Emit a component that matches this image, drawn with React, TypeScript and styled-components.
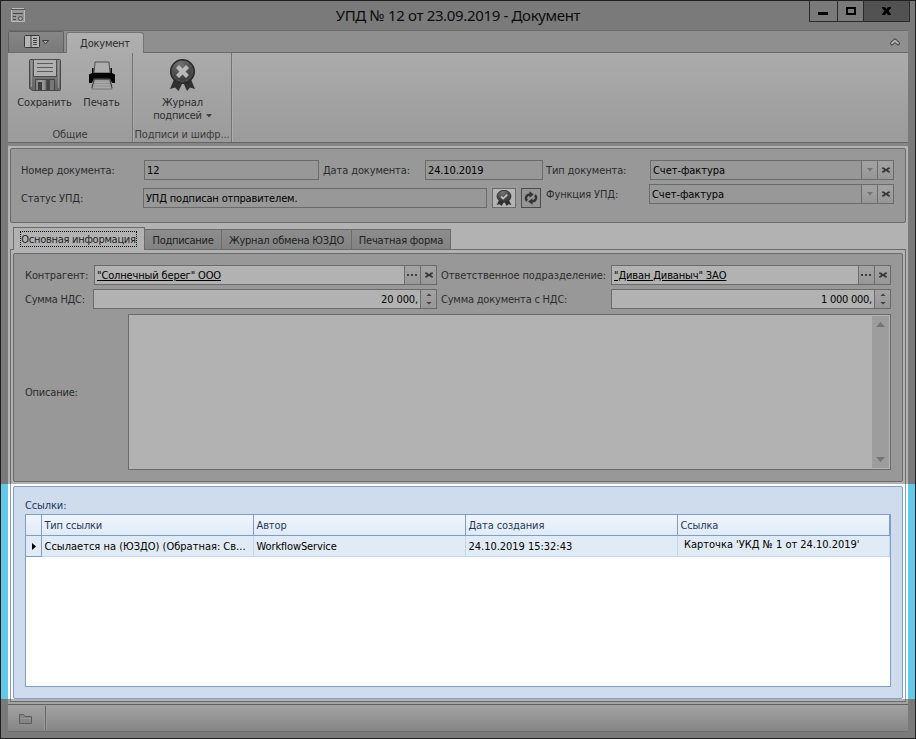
import React from 'react';
import styled, { createGlobalStyle, css } from 'styled-components';

const LINE = '#6b6b6b';
const PAGE = '#b2b2b2';
const PANEL = '#989898';
const FRAME = '#7a7a7a';
const BLUE = '#809dc4';

const GlobalStyle = createGlobalStyle`
  *, *::before, *::after { box-sizing: border-box; }
  html, body { margin: 0; padding: 0; }
  body {
    font-family: "DejaVu Sans Condensed", "DejaVu Sans", sans-serif;
    font-stretch: condensed;
    font-size: 11px;
    line-height: 14px;
    color: #2c2c2c;
    overflow: hidden;
  }
  svg { display: block; flex: none; }
`;

const Window = styled.div`
  width: 916px;
  height: 739px;
  border: 1px solid #202020;
  background: ${FRAME};
  display: flex;
  flex-direction: column;
`;

const Text = styled.span<{ $ls?: number }>`
  white-space: pre;
  letter-spacing: ${(p) => p.$ls ?? -0.12}px;
`;

/* Title bar */
const TitleBar = styled.header`
  height: 29px;
  flex: none;
  display: grid;
  grid-template-columns: 105px 1fr 105px;
`;
const TitleIcon = styled.div`
  padding: 6px 0 0 10px;
`;
const Title = styled.h1`
  margin: 0;
  padding-top: 3px;
  font: 400 15px/22px "Noto Sans", sans-serif;
  letter-spacing: -0.34px;
  text-align: center;
  color: #0c0c0c;
  white-space: pre;
`;
const WindowButtons = styled.div`
  width: 101px;
  height: 21px;
  margin-left: -1px;
  display: flex;
  border: 1px solid #2b2b2b;
  border-top: 0;
`;
const WindowButton = styled.button<{ $w: number; $close?: boolean }>`
  width: ${(p) => p.$w}px;
  padding: 0;
  border: 0;
  border-right: ${(p) => (p.$close ? 0 : 1)}px solid #2b2b2b;
  background: ${(p) => (p.$close ? '#525252' : 'transparent')};
`;

/* Ribbon */
const RibbonTabs = styled.div`
  height: 23px;
  flex: none;
  margin: 0 7px;
  padding-top: 1px;
  border-top: 1px solid #6c6c6c;
  border-bottom: 1px solid ${LINE};
  background: #8f8f8f;
  display: flex;
`;
const AppButton = styled.button`
  width: 56px;
  height: 21px;
  margin-top: -1px;
  padding: 3px 0 0 15px;
  border: 1px solid #616161;
  border-bottom: 0;
  border-radius: 2px 2px 0 0;
  background: linear-gradient(#868686, #7a7a7a);
  display: flex;
`;
const RibbonTab = styled.div`
  width: 78px;
  height: 22px;
  margin-left: 2px;
  padding-top: 4px;
  border: 1px solid #747474;
  border-bottom: 0;
  border-radius: 3px 3px 0 0;
  background: linear-gradient(#b0b0b0, #ababab);
  text-align: center;
`;
const Collapse = styled.div`
  margin: 6px 8px 0 auto;
`;
const Ribbon = styled.div`
  height: 90px;
  flex: none;
  margin: 0 7px;
  border-bottom: 1px solid #656565;
  background: linear-gradient(#ababab, #9b9b9b);
  display: flex;
`;
const Group = styled.section<{ $w: number }>`
  width: ${(p) => p.$w}px;
  border-right: 1px solid #737373;
  box-shadow: 1px 0 #adadad;
  display: flex;
  flex-direction: column;
`;
const GroupItems = styled.div`
  height: 75px;
  padding-left: 1px;
  display: flex;
  justify-content: center;
`;
const GroupCaption = styled.div`
  text-align: center;
  color: #3b3b3b;
  white-space: nowrap;
`;
const Tool = styled.div<{ $w: number }>`
  width: ${(p) => p.$w}px;
  display: flex;
  flex-direction: column;
  align-items: center;
`;
const ToolIcon = styled.div<{ $pad: number }>`
  height: 43px;
  padding-top: ${(p) => p.$pad}px;
`;
const ToolLabel = styled.div`
  height: 13px;
  display: flex;
  align-items: center;
  gap: 4px;
  line-height: 13px;
`;

/* Header form */
const FormArea = styled.div`
  height: 84px;
  flex: none;
  margin: 0 7px;
  padding: 5px 2px 0;
  border-top: 3px solid #858585;
  background: ${PAGE};
`;
const HeaderPanel = styled.section`
  height: 75px;
  margin-top: -3px;
  padding: 11px 0 0 10px;
  border: 1px solid ${LINE};
  border-radius: 2px;
  background: ${PANEL};
  display: grid;
  grid-template-columns: 525px 348px;
`;
const Col = styled.div<{ $gap: number }>`
  display: flex;
  flex-direction: column;
  gap: ${(p) => p.$gap}px;
`;
const Row = styled.div`
  height: 20px;
  display: flex;
  align-items: center;
`;
const Label = styled.label<{ $w: number; $ls?: number; $inset?: boolean }>`
  width: ${(p) => p.$w}px;
  flex: none;
  padding: 2px 0 0 ${(p) => (p.$inset ? 4 : 0)}px;
  letter-spacing: ${(p) => p.$ls ?? -0.12}px;
  white-space: pre;
`;
const Field = styled.div<{ $w: number; $light?: boolean; $right?: boolean }>`
  width: ${(p) => p.$w}px;
  height: 20px;
  flex: none;
  border: 1px solid ${LINE};
  background: ${(p) => (p.$light ? PAGE : PANEL)};
  color: #000;
  display: flex;
  align-items: stretch;
  > span {
    flex: 1;
    padding: 3px 2px 0 2px;
    text-align: ${(p) => (p.$right ? 'right' : 'left')};
  }
`;
const FieldLink = styled.span`
  text-decoration: underline;
  text-underline-offset: 1px;
  letter-spacing: -0.14px;
  white-space: pre;
`;
const FieldButton = styled.i`
  width: 16px;
  border-left: 1px solid ${LINE};
  background: linear-gradient(#a3a3a3, #979797);
  display: flex;
  align-items: center;
  justify-content: center;
`;
const IconButton = styled.button<{ $w: number; $light?: boolean }>`
  width: ${(p) => p.$w}px;
  height: 20px;
  margin-left: 5px;
  padding: 0;
  border: 1px solid ${(p) => (p.$light ? '#6b6b6b' : '#4c4c4c')};
  background: ${(p) => (p.$light ? '#b4b4b4' : '#959595')};
  display: flex;
  align-items: center;
  justify-content: center;
`;

/* Tabs */
const TabStrip = styled.nav`
  height: 22px;
  flex: none;
  margin: 0 7px;
  padding-left: 5px;
  background: ${PAGE};
  display: flex;
  align-items: flex-end;
`;
const Tab = styled.div<{ $w: number; $active?: boolean }>`
  width: ${(p) => p.$w}px;
  height: 20px;
  padding-top: 4px;
  border: 1px solid ${LINE};
  border-left: 0;
  border-bottom: 0;
  background: linear-gradient(#8d8d8d, #828282);
  color: #222;
  text-align: center;
  ${(p) =>
    p.$active &&
    css`
      position: relative;
      height: 23px;
      margin-bottom: -1px;
      padding: 3px 7px 0 6px;
      border-left: 1px solid ${LINE};
      background: ${PAGE};
    `}
`;
const Focus = styled.div`
  height: 16px;
  border: 1px dotted #000;
  display: flex;
  justify-content: center;
  line-height: 16px;
`;

const PageUpper = styled.div`
  height: 235px;
  flex: none;
  margin: 0 7px;
  padding: 0 2px;
  background: ${PAGE};
`;
const PageUpperInner = styled.div`
  height: 235px;
  padding: 3px 2px 2px;
  border: 1px solid ${LINE};
  border-bottom: 0;
`;
const DetailsPanel = styled.section`
  height: 229px;
  padding: 11px 0 0 11px;
  border: 1px solid ${LINE};
  border-radius: 2px;
  background: ${PANEL};
  display: flex;
  flex-direction: column;
`;
const DetailsRow = styled(Row)`
  margin-bottom: 4px;
`;
const DescriptionRow = styled.div`
  height: 156px;
  margin-top: 1px;
  display: flex;
  align-items: center;
`;
const Description = styled.div`
  width: 763px;
  height: 156px;
  padding: 1px;
  border: 1px solid ${LINE};
  background: ${PAGE};
  display: flex;
  justify-content: flex-end;
`;
const ScrollBar = styled.div`
  width: 17px;
  padding: 6px 0;
  background: #9d9d9d;
  display: flex;
  flex-direction: column;
  align-items: center;
  justify-content: space-between;
`;

/* Links */
const Highlight = styled.div`
  height: 215px;
  flex: none;
  padding: 0 7px;
  background: #63c9e8;
`;
const HighlightPage = styled.div`
  height: 215px;
  padding: 0 2px;
  background: #fff;
`;
const HighlightInner = styled.div`
  height: 215px;
  padding: 2px 2px 0;
  border: 1px solid ${BLUE};
  border-width: 0 1px;
`;
const LinksPanel = styled.section`
  height: 213px;
  padding: 11px 0 0 11px;
  border: 1px solid ${BLUE};
  border-radius: 2px;
  background: #cfdcee;
  color: #1e395b;
`;
const LinksCaption = styled.div`
  height: 16px;
  padding-top: 1px;
`;
const Table = styled.div`
  width: 866px;
  height: 173px;
  border: 1px solid ${BLUE};
  background: #fff;
`;
const TableRow = styled.div<{ $head?: boolean }>`
  width: 864px;
  height: 21px;
  display: grid;
  grid-template-columns: 16px 212px 212px 212px 212px;
  background: ${(p) => (p.$head ? 'linear-gradient(#f0f5fc, #dfeaf7)' : '#e1ebf6')};
  color: ${(p) => (p.$head ? '#1e395b' : '#000')};
  > div {
    padding: 4px 0 0 2.5px;
    border-right: 1px solid ${(p) => (p.$head ? BLUE : '#c1d7f2')};
    border-bottom: 1px solid ${(p) => (p.$head ? BLUE : '#c1d7f2')};
    overflow: hidden;
  }
  > div:first-child {
    padding: 7px 0 0 6px;
    border-color: ${BLUE};
  }
`;
const LinkCell = styled.div`
  && {
    padding: 2px 0 0 6px;
  }
`;

/* Bottom */
const PageFoot = styled.div`
  height: 5px;
  flex: none;
  margin: 0 7px;
  padding: 0 2px;
  background: #a2a2a2;
`;
const PageFootInner = styled.div`
  height: 3px;
  border: 1px solid ${LINE};
  border-top: 0;
  background: ${PAGE};
`;
const StatusBar = styled.footer`
  height: 28px;
  flex: none;
  margin: 0 7px;
  padding: 8px 0 0 11px;
  border-top: 1px solid #5f5f5f;
  border-bottom: 1px solid #707070;
  background: linear-gradient(#a2a2a2, #868686);
  display: flex;
`;
const StatusDivider = styled.div`
  width: 3px;
  height: 24px;
  margin: -7px 0 0 11px;
  border: 1px solid #9d9d9d;
  border-width: 0 1px;
  background: #656565;
`;

const ClearIcon = () => (
  <svg width="8" height="7" viewBox="0 0 8 7">
    <path d="M0 0.500h2L4 2.200 6 0.500h2v1L5.700 3 8 4.500v1H6L4 3.800 2 5.500H0v-1L2.300 3 0 1.500z" fill="#353535" />
  </svg>
);
const DotsIcon = () => (
  <svg width="11" height="4" viewBox="0 0 11 4">
    <path d="M0 1h2v2H0zM4 1h2v2H4zM8 1h2v2H8z" fill="#3d3d3d" />
  </svg>
);
const DropIcon = ({ color = '#727272' }: { color?: string }) => (
  <svg width="6" height="4" viewBox="0 0 6 4">
    <path d="M0 0h6L3 3.500z" fill={color} />
  </svg>
);
const SpinIcon = () => (
  <svg width="6" height="12" viewBox="0 0 6 12">
    <path d="M0.500 3L3 0.500 5.500 3zM0.500 9L3 11.500 5.500 9z" fill="#3d3d3d" />
  </svg>
);
const ScrollArrow = ({ down }: { down?: boolean }) => (
  <svg width="9" height="5" viewBox="0 0 9 5">
    <path d={down ? 'M0 0h9L4.500 5z' : 'M0 5h9L4.500 0z'} fill="#757575" />
  </svg>
);
const FormIcon = () => (
  <svg width="14" height="16" viewBox="0 0 14 16">
    <path d="M1 1.500h12M.5 2.500h13v12H.5z" fill="#979797" stroke="#bababa" />
    <path d="M0 2.500h14" stroke="#555" />
    <path d="M2 6.500h10M2 9.500h3M2 12.500h3" stroke="#474747" />
    <circle cx="9.500" cy="11.500" r="2" fill="#a8a8a8" stroke="#4d4d4d" />
  </svg>
);
const AppMenuIcon = () => (
  <svg width="26" height="13" viewBox="0 0 26 13">
    <rect x=".5" y=".5" width="15" height="12" rx="1" fill="#b5b5b5" stroke="#373737" />
    <path d="M7 1v11" stroke="#373737" />
    <path d="M9 3.500h4M9 5.500h4M9 7.500h4M9 9.500h4" stroke="#3f3f3f" />
    <path d="M18.500 5.500h6l-3 3.500z" fill="#aaa" stroke="#3d3d3d" />
  </svg>
);
const CollapseIcon = () => (
  <svg width="10" height="8" viewBox="0 0 10 8">
    <path d="M5 .7L9.300 4.500v1.800L8 7.200 5 4.700 2 7.200.7 6.300V4.500z" fill="#b0b0b0" stroke="#303030" />
  </svg>
);
const SaveIcon = () => (
  <svg width="32" height="32" viewBox="0 0 32 32">
    <defs>
      <linearGradient id="disk" x2="0" y2="1">
        <stop stopColor="#8a8a8a" />
        <stop offset="1" stopColor="#656565" />
      </linearGradient>
      <linearGradient id="shutter" x2="1" y2="0">
        <stop stopColor="#7c7c7c" />
        <stop offset=".25" stopColor="#a2a2a2" />
        <stop offset=".5" stopColor="#8b8b8b" />
        <stop offset=".6" stopColor="#404040" />
        <stop offset="1" stopColor="#565656" />
      </linearGradient>
    </defs>
    <path d="M1.500.5h29a1 1 0 0 1 1 1v29a1 1 0 0 1-1 1H3.500l-3-2v-28a1 1 0 0 1 1-1z" fill="url(#disk)" stroke="#484848" />
    <path d="M2.500 3v25M29.500 3v26" stroke="#979797" />
    <rect x="4.500" y=".5" width="23" height="17" fill="#b0b0b0" stroke="#4d4d4d" />
    <path d="M8 4.500h16M8 8.500h16M8 12.500h16" stroke="#5c5c5c" />
    <rect x="6.500" y="20.500" width="19" height="11" fill="url(#shutter)" stroke="#474747" />
    <path d="M9 23h4v8H9z" fill="#3e3e3e" />
    <path d="M21 21h4v10h-4z" fill="#777" />
  </svg>
);
const PrintIcon = () => (
  <svg width="26" height="29" viewBox="0 0 26 29">
    <path d="M6 1h14l1 11H5z" fill="#adadad" stroke="#4f4f4f" />
    <path d="M3 7h1.500v5h17V7H23v5l3 1.500V22h-3l-2-4.500H5L3 22H0v-8.500L3 12z" fill="#050505" />
    <path d="M5 17.500h16L23.500 27h-21z" fill="#080808" />
    <path d="M5.500 18.500h15l2.500 9.500H3z" fill="#a9a9a9" stroke="#555" strokeWidth=".6" />
    <path d="M6 20h14M5 22.500h16M4.500 25h17" stroke="#8a8a8a" strokeWidth=".8" />
  </svg>
);
const SealIcon = ({ w, h, check }: { w: number; h: number; check?: boolean }) => (
  <svg width={w} height={h} viewBox="0 0 27 32" preserveAspectRatio="none">
    <defs>
      <radialGradient id="seal" cx=".4" cy=".2" r=".9">
        <stop stopColor="#747474" />
        <stop offset=".6" stopColor="#444" />
        <stop offset="1" stopColor="#353535" />
      </radialGradient>
    </defs>
    <path d="M6 18L1 30l5-1.500L9.500 32 14 23l4 9 3-3.500 5 1.500-5-12z" fill="#303030" />
    <circle cx="13.500" cy="12.500" r="11.800" fill="url(#seal)" stroke="#2b2b2b" strokeWidth="1.500" />
    {!check && (
      <circle cx="13.500" cy="12.500" r="9.800" fill="none" stroke="#646464" strokeWidth=".8" strokeDasharray="3 1.500" />
    )}
    {check ? (
      <path d="M8.500 13l3.500 4L19 9.500" fill="none" stroke="#c2c2c2" strokeWidth="3.200" />
    ) : (
      <path d="M10 6l3.500 3.500L17 6l3 3-3.500 3.500L20 16l-3 3-3.500-3.500L10 19l-3-3 3.500-3.500L7 9z" fill="#b9b9b9" />
    )}
  </svg>
);
const RefreshIcon = () => (
  <svg width="14" height="14" viewBox="0 0 14 14">
    <path d="M3.200 9.800C1 8 1.500 4 6 3.500M10.800 4.200C13 6 12.500 10 8 10.500" fill="none" stroke="#353535" strokeWidth="2.400" />
    <path d="M5.500 .3L9.800 3.500 5.500 6.700zM8.500 13.700L4.200 10.500 8.500 7.300z" fill="#353535" />
  </svg>
);
const FolderIcon = () => (
  <svg width="14" height="12" viewBox="0 0 14 12">
    <path d="M.5 10.500v-9h4l1.500 2h6.500v7z" fill="#858585" stroke="#5e5e5e" />
    <path d="M2 5.500h10" stroke="#999" />
  </svg>
);

const Combo = ({ w }: { w: number }) => (
  <Field $w={w}>
    <Text $ls={-0.05}>Счет-фактура</Text>
    <FieldButton><DropIcon /></FieldButton>
    <FieldButton><ClearIcon /></FieldButton>
  </Field>
);

export default function App() {
  return (
    <>
      <GlobalStyle />
      <Window>
        <TitleBar>
          <TitleIcon><FormIcon /></TitleIcon>
          <Title>УПД № 12 от 23.09.2019 - Документ</Title>
          <WindowButtons>
            <WindowButton $w={28} aria-label="Свернуть">
              <svg width="27" height="20"><path d="M8 11h10v3H8z" /></svg>
            </WindowButton>
            <WindowButton $w={26} aria-label="Развернуть">
              <svg width="25" height="20"><path d="M9 7h8v6H9z" fill="none" stroke="#000" strokeWidth="2" /></svg>
            </WindowButton>
            <WindowButton $w={45} $close aria-label="Закрыть">
              <svg width="45" height="20"><path d="M18 6h3l1.500 2L24 6h3v1l-2.500 3 2.500 3v1h-3l-1.500-2L21 14h-3v-1l2.500-3L18 7z" /></svg>
            </WindowButton>
          </WindowButtons>
        </TitleBar>

        <RibbonTabs>
          <AppButton><AppMenuIcon /></AppButton>
          <RibbonTab><Text $ls={-0.2}>Документ</Text></RibbonTab>
          <Collapse><CollapseIcon /></Collapse>
        </RibbonTabs>
        <Ribbon>
          <Group $w={125}>
            <GroupItems>
              <Tool $w={62}>
                <ToolIcon $pad={6}><SaveIcon /></ToolIcon>
                <ToolLabel><Text $ls={-0.15}>Сохранить</Text></ToolLabel>
              </Tool>
              <Tool $w={52}>
                <ToolIcon $pad={8}><PrintIcon /></ToolIcon>
                <ToolLabel><Text>Печать</Text></ToolLabel>
              </Tool>
            </GroupItems>
            <GroupCaption><Text>Общие</Text></GroupCaption>
          </Group>
          <Group $w={99}>
            <GroupItems>
              <Tool $w={92}>
                <ToolIcon $pad={6}><SealIcon w={27} h={32} /></ToolIcon>
                <ToolLabel><Text>Журнал</Text></ToolLabel>
                <ToolLabel><Text $ls={-0.2}>подписей</Text><DropIcon color="#444" /></ToolLabel>
              </Tool>
            </GroupItems>
            <GroupCaption><Text $ls={-0.15}>Подписи и шифр...</Text></GroupCaption>
          </Group>
        </Ribbon>

        <FormArea>
          <HeaderPanel>
            <Col $gap={8}>
              <Row>
                <Label $w={123} $ls={-0.17}>Номер документа:</Label>
                <Field $w={175}><Text>12</Text></Field>
                <Label $w={106} $inset>Дата документа:</Label>
                <Field $w={118}><Text>24.10.2019</Text></Field>
              </Row>
              <Row>
                <Label $w={122}>Статус УПД:</Label>
                <Field $w={344}><Text $ls={-0.16}>УПД подписан отправителем.</Text></Field>
                <IconButton $w={24} $light><SealIcon w={16} h={16} check /></IconButton>
                <IconButton $w={20}><RefreshIcon /></IconButton>
              </Row>
            </Col>
            <Col $gap={4}>
              <Row>
                <Label $w={104}>Тип документа:</Label>
                <Combo w={244} />
              </Row>
              <Row>
                <Label $w={103}>Функция УПД:</Label>
                <Combo w={245} />
              </Row>
            </Col>
          </HeaderPanel>
        </FormArea>

        <TabStrip>
          <Tab $w={132} $active><Focus><Text $ls={-0.27}>Основная информация</Text></Focus></Tab>
          <Tab $w={77}><Text $ls={-0.27}>Подписание</Text></Tab>
          <Tab $w={130}><Text $ls={-0.2}>Журнал обмена ЮЗДО</Text></Tab>
          <Tab $w={99}><Text $ls={-0.2}>Печатная форма</Text></Tab>
        </TabStrip>

        <PageUpper>
          <PageUpperInner>
            <DetailsPanel>
              <DetailsRow>
                <Label $w={69}>Контрагент:</Label>
                <Field $w={343} $light>
                  <FieldLink>"Солнечный берег" ООО</FieldLink>
                  <FieldButton><DotsIcon /></FieldButton>
                  <FieldButton><ClearIcon /></FieldButton>
                </Field>
                <Label $w={174} $inset $ls={-0.08}>Ответственное подразделение:</Label>
                <Field $w={280} $light>
                  <FieldLink>"Диван Диваныч" ЗАО</FieldLink>
                  <FieldButton><DotsIcon /></FieldButton>
                  <FieldButton><ClearIcon /></FieldButton>
                </Field>
              </DetailsRow>
              <DetailsRow>
                <Label $w={68} $ls={-0.25}>Сумма НДС:</Label>
                <Field $w={344} $light $right>
                  <Text>20 000,</Text>
                  <FieldButton><SpinIcon /></FieldButton>
                </Field>
                <Label $w={174} $inset $ls={-0.2}>Сумма документа с НДС:</Label>
                <Field $w={280} $light $right>
                  <Text $ls={-0.25}>1 000 000,</Text>
                  <FieldButton><SpinIcon /></FieldButton>
                </Field>
              </DetailsRow>
              <DescriptionRow>
                <Label $w={103} $ls={-0.2}>Описание:</Label>
                <Description>
                  <ScrollBar><ScrollArrow /><ScrollArrow down /></ScrollBar>
                </Description>
              </DescriptionRow>
            </DetailsPanel>
          </PageUpperInner>
        </PageUpper>

        <Highlight>
          <HighlightPage>
            <HighlightInner>
              <LinksPanel>
                <LinksCaption><Text>Ссылки:</Text></LinksCaption>
                <Table>
                  <TableRow $head>
                    <div />
                    <div><Text $ls={-0.2}>Тип ссылки</Text></div>
                    <div><Text>Автор</Text></div>
                    <div><Text>Дата создания</Text></div>
                    <div><Text>Ссылка</Text></div>
                  </TableRow>
                  <TableRow>
                    <div><svg width="4" height="7"><path d="M0 0l4 3.500L0 7z" /></svg></div>
                    <div><Text $ls={0}>Ссылается на (ЮЗДО) (Обратная: Св...</Text></div>
                    <div><Text>WorkflowService</Text></div>
                    <div><Text $ls={-0.03}>24.10.2019 15:32:43</Text></div>
                    <LinkCell><Text $ls={-0.02}>Карточка 'УКД № 1 от 24.10.2019'</Text></LinkCell>
                  </TableRow>
                </Table>
              </LinksPanel>
            </HighlightInner>
          </HighlightPage>
        </Highlight>

        <PageFoot><PageFootInner /></PageFoot>
        <StatusBar>
          <FolderIcon />
          <StatusDivider />
        </StatusBar>
      </Window>
    </>
  );
}
